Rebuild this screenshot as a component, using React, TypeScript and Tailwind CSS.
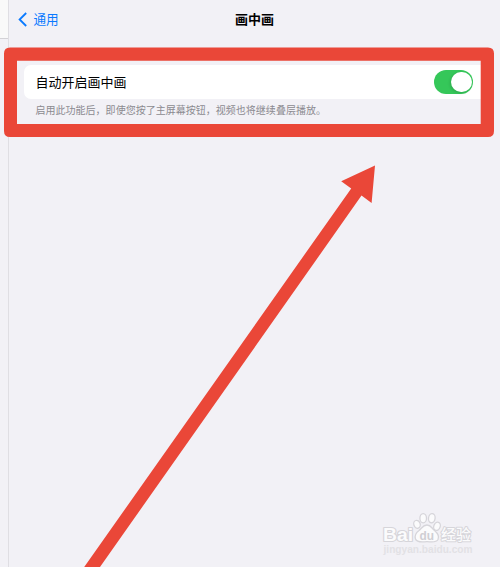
import React from 'react';

interface SettingRowProps {
  label: string;
  enabled: boolean;
}

const Toggle: React.FC<{ enabled: boolean }> = ({ enabled }) => (
  <div
    className={`
      flex h-[23.5px] w-[39px] items-center rounded-full px-[1.5px]
      ${enabled ? 'justify-end bg-[#35c759]' : 'justify-start bg-[#e9e9ea]'}
    `}
  >
    <div className="h-[20.5px] w-[20.5px] rounded-full bg-white shadow-[-1px_1px_3px_rgba(0,0,0,0.15)]" />
  </div>
);

const SettingRow: React.FC<SettingRowProps> = ({ label, enabled }) => (
  <div className="flex h-[34px] items-center justify-between rounded-[7px] bg-white pl-[11.5px] pr-5">
    <span className="text-[13px] leading-none text-black">{label}</span>
    <Toggle enabled={enabled} />
  </div>
);

const NavBar: React.FC = () => (
  <div className="grid h-[39px] grid-cols-3 items-center">
    <div className="flex items-center pl-[9px] text-[#0a7aff]">
      <svg className="h-[15px] w-[10px]" viewBox="0 0 10 15" fill="none">
        <path d="M8.2 1 L1.6 7.5 L8.2 14" stroke="currentColor" strokeWidth="1.8" />
      </svg>
      <span className="ml-[5.5px] pt-[1.5px] text-[12.6px] leading-none">通用</span>
    </div>
    <h1 className="text-center text-[13px] font-bold leading-none text-black">画中画</h1>
  </div>
);

// Red frame and arrow that point at the switch
const Annotation: React.FC = () => (
  <svg className="pointer-events-none absolute inset-0 h-[567px] w-[500px]" viewBox="0 0 500 567" fill="#ea4738">
    <path
      fillRule="evenodd"
      d="M10 47.6 H488 Q494 47.6 494 53.6 V131 Q494 137 488 137 H10 Q4 137 4 131 V53.6 Q4 47.6 10 47.6 Z M17 60.8 V124 H480.7 V60.8 Z"
    />
    <path d="M375 165.5 L371.6 203 L361.5 195.6 L100 567 H84.2 L351.2 188.4 L341.2 181.3 Z" />
  </svg>
);

const Watermark: React.FC = () => (
  <svg
    className="absolute left-[380px] top-[508px] h-[52px] w-[100px]"
    viewBox="0 0 100 52"
    fill="#fbfbfc"
    stroke="#d6d5da"
    strokeWidth="1.3"
    strokeLinejoin="round"
    fontFamily="'Liberation Sans', 'Noto Sans CJK SC', sans-serif"
  >
    <text x="3" y="32.5" fontSize="18" fontWeight="bold" strokeWidth="2.2" paintOrder="stroke" textLength="30" lengthAdjust="spacingAndGlyphs">Bai</text>
    <ellipse cx="37" cy="16.3" rx="3.2" ry="4" transform="rotate(-18 37 16.3)" />
    <ellipse cx="43.2" cy="10.2" rx="3.3" ry="4.6" />
    <ellipse cx="51.8" cy="10.2" rx="3.3" ry="4.6" transform="rotate(8 51.8 10.2)" />
    <ellipse cx="57" cy="18.3" rx="3.2" ry="4.2" transform="rotate(20 57 18.3)" />
    <path d="M47 17 C43 17 42 20 39 22.5 C35 25.5 34.5 28 35.5 31 C37 35.2 43 33.7 47 33.7 C51 33.7 56 35.2 58 31.5 C59.5 28.5 58 25.5 54.5 22.5 C51.5 20 51 17 47 17 Z" />
    <text x="39.5" y="31.5" fontSize="12.5" fontWeight="bold" fill="#cfced3" stroke="none" textLength="14.5" lengthAdjust="spacingAndGlyphs">du</text>
    <text x="61" y="32.3" fontSize="15" fontWeight="500" strokeWidth="2" paintOrder="stroke" textLength="30" lengthAdjust="spacingAndGlyphs" fontFamily="'Noto Sans CJK SC', sans-serif">经验</text>
    <text x="3.5" y="45" fontSize="10" fontWeight="bold" fill="#e2e1e5" stroke="none" textLength="89" lengthAdjust="spacingAndGlyphs">jingyan.baidu.com</text>
  </svg>
);

const App: React.FC = () => {
  return (
    <div className="relative flex h-[567px] w-[500px] overflow-hidden bg-[#f2f1f6] font-['Liberation_Sans','Noto_Sans_CJK_SC',sans-serif]">
      <aside className="w-[9px] shrink-0 border-r border-[#dfdee3]">
        <div className="h-[39px] border-b border-[#d3d2d6] bg-[#f9f9f9]" />
      </aside>

      <main className="w-[491px] shrink-0">
        <NavBar />
        <section className="ml-[15px] mr-[7px] mt-[26px]">
          <SettingRow label="自动开启画中画" enabled />
          <p className="ml-[11.5px] mt-[7px] whitespace-nowrap text-[10.03px] leading-[10px] text-[#8b8a90]">
            启用此功能后，即使您按了主屏幕按钮，视频也将继续叠层播放。
          </p>
        </section>
      </main>

      <Annotation />
      <Watermark />
    </div>
  );
};

export default App;
